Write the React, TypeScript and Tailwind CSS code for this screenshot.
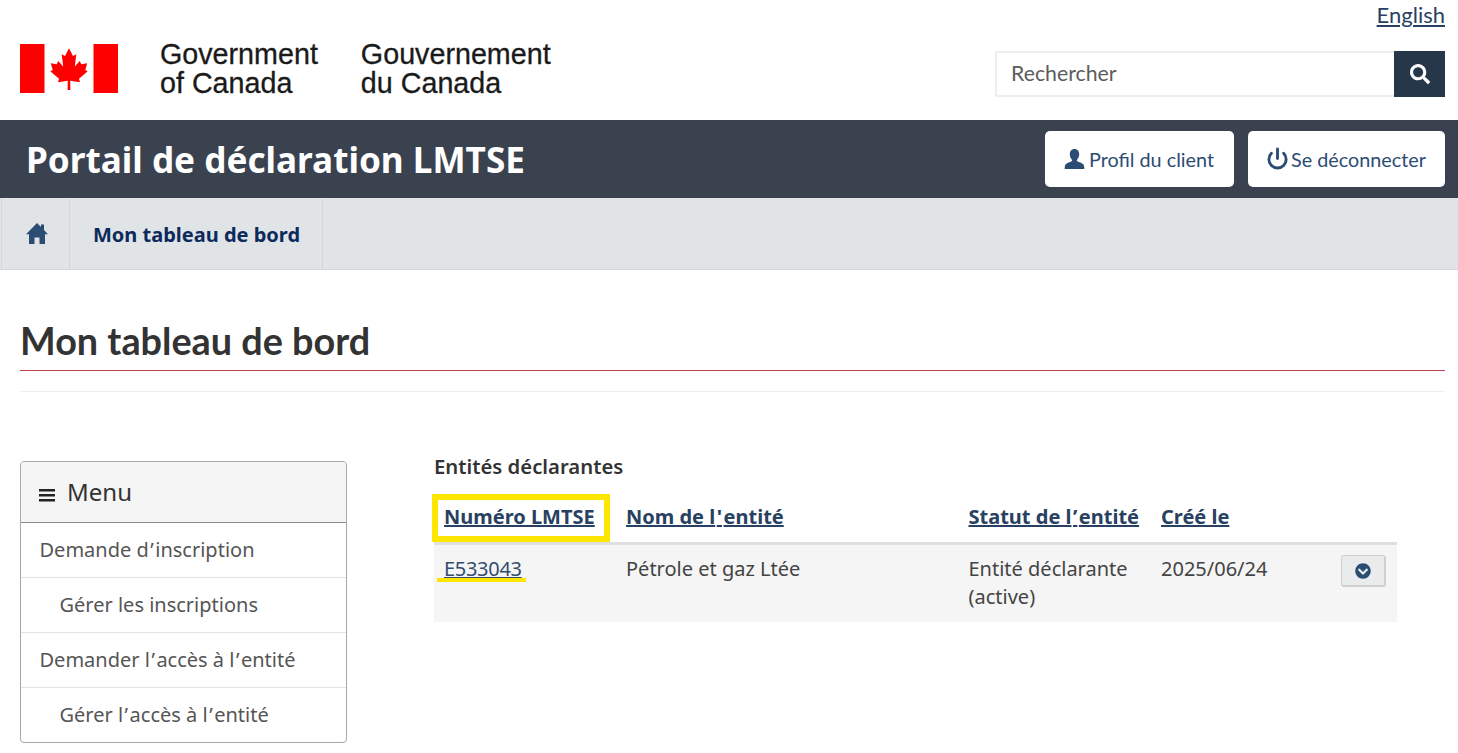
import React from 'react';
import { FaChevronCircleDown, FaSearch } from 'react-icons/fa';
import { Power } from 'lucide-react';

const noto = "font-['Noto_Sans',sans-serif]";
const lato = "font-['Lato',sans-serif]";

// right half of the maple leaf, mirrored below
const leafHalf: [number, number][] = [
  [49, 4.3], [53, 12], [56.3, 10.3], [54.800, 22.500], [59.800, 17], [61.300, 20.300], [67.200, 19.200],
  [65.300, 26], [67.700, 27.300], [59, 34.800], [60, 38.300], [50.200, 36.800], [50.400, 46],
];
const leafPoints = [...leafHalf, ...[...leafHalf].reverse().map(([x, y]) => [98 - x, y])]
  .map((p) => p.join(','))
  .join(' ');

const Flag = () => (
  <svg width="98" height="49" viewBox="0 0 98 49" className="shrink-0">
    <rect x="0" y="0" width="24.5" height="49" fill="#ff0000" />
    <rect x="73.5" y="0" width="24.5" height="49" fill="#ff0000" />
    <polygon fill="#ff0000" points={leafPoints} />
  </svg>
);

const UserIcon = () => (
  <svg width="21" height="20" viewBox="0 0 21 20" fill="#2b4d74">
    <path d="M10.500 0c3 0 4.700 2.200 4.700 5.200 0 2.200-.9 4-2 5.200-.5.600-.5 1.500.2 1.900 2.500 1.300 6 2 6.600 4.400.2.900.3 1.800.3 3.300H.7c0-1.500.1-2.400.3-3.300.6-2.400 4.100-3.100 6.600-4.400.7-.4.700-1.300.2-1.900-1.100-1.200-2-3-2-5.200C5.800 2.200 7.500 0 10.500 0z" />
  </svg>
);

const HomeIcon = () => (
  <svg width="22" height="21" viewBox="0 0 22 21" fill="#2b4d74">
    <path d="M11 0l4 4V1.500h3v5.500l4 4.300h-3V21h-5.500v-6.500h-5V21H3V11.300H0z" />
  </svg>
);

// the apostrophes sit wider in the reference than Noto Sans sets them
const Apos = ({ c }: { c: string }) => <span className="mx-[1.5px]">{c}</span>;

const spaced = (label: string) =>
  label.split(/(['’])/).map((part, i) => (part === '’' || part === "'" ? <Apos key={i} c={part} /> : part));

const MenuItem = ({ label, sub }: { label: string; sub?: boolean }) => (
  <li className={`h-[55px] last:h-[54px] border-b border-[#e3e3e3] last:border-b-0 flex items-center text-[20px] text-[#555] ${sub ? 'pl-[38.500px]' : 'pl-[18.500px]'}`}>
    <span>{spaced(label)}</span>
  </li>
);

export default function App() {
  return (
    <div className={`${noto} bg-white w-[1458px] h-[753px] overflow-hidden text-[#333]`}>
      <header className="h-[120px] flex justify-between pl-5 pr-[13px]">
        <div className="flex items-start pt-[44px]">
          <Flag />
          <div className="ml-[42px] flex gap-[43px] -mt-[4px] font-['Liberation_Sans',sans-serif] text-[28.700px] leading-[29px] text-[#1a1a1a] [-webkit-text-stroke:0.3px_#1a1a1a]">
            <div>Government<br />of Canada</div>
            <div>Gouvernement<br />du Canada</div>
          </div>
        </div>
        <div className="flex flex-col items-end">
          <a href="#" className={`${lato} mt-[1px] text-[22px] leading-[27px] text-[#284162] underline`}>English</a>
          <div className="mt-[23px] flex h-[46px] w-[450px]">
            <div className={`${lato} flex-1 border-2 border-r-0 border-[#eeeeee] flex items-center pl-[14px] text-[21.300px] text-[#5c5c5c]`}>
              Rechercher
            </div>
            <button className="w-[51px] bg-[#26374a] flex items-center justify-center text-white">
              <FaSearch size={20} />
            </button>
          </div>
        </div>
      </header>

      <div className="h-[78px] bg-[#3a4250] flex items-center justify-between pl-[26px] pr-[13px]">
        <div className="text-[35.150px] font-bold text-white leading-none mt-[2px]">Portail de déclaration LMTSE</div>
        <div className={`${lato} flex gap-[14px] text-[19.800px] text-[#2b4d74]`}>
          <button className="h-[56px] w-[189px] bg-white rounded-[5px] flex items-center justify-center gap-[4px] pr-[1px]">
            <UserIcon /> <span className="mt-[1px]">Profil du client</span>
          </button>
          <button className="h-[56px] w-[197px] bg-white rounded-[5px] flex items-center justify-center gap-[2px] pr-[1px]">
            <Power size={23} strokeWidth={3} className="-mt-[2px]" /> <span className="mt-[1px]">Se déconnecter</span>
          </button>
        </div>
      </div>

      <nav className="h-[72px] bg-[#e1e4e7] border-b border-[#d3d6d9] flex pl-[1px]">
        <div className="w-[69px] border-x border-[#d3d6d9] flex items-center justify-center pl-[2px]">
          <HomeIcon />
        </div>
        <div className="w-[253px] border-r border-[#d3d6d9] flex items-center pl-[23px] pt-[2px] text-[20px] font-bold text-[#0d2a5c]">
          Mon tableau de bord
        </div>
      </nav>

      <main className="px-5 pr-[13px]">
        <h1 className={`${lato} mt-[48px] h-[53px] border-b border-[#c0444c] text-[37.800px] font-bold leading-[46px] text-[#333]`}>
          Mon tableau de bord
        </h1>
        <div className="mt-[20px] border-t border-[#eeeeee]" />

        <div className="mt-[69px] flex items-start">
          <aside className="w-[327px] shrink-0 border border-[#a8a8a8] rounded-[4px] overflow-hidden">
            <div className="h-[61px] bg-[#f5f5f5] border-b border-[#8c8c8c] flex items-center pl-[18px] text-[24px] text-[#333]">
              <svg width="16" height="13" viewBox="0 0 16 13" className="mr-[12px] mt-[6px]" fill="#222">
                <rect x="0" y="0" width="16" height="2.500" />
                <rect x="0" y="5" width="16" height="2.500" />
                <rect x="0" y="10" width="16" height="2.500" />
              </svg>
              Menu
            </div>
            <ul>
              <MenuItem label="Demande d’inscription" />
              <MenuItem label="Gérer les inscriptions" sub />
              <MenuItem label="Demander l’accès à l’entité" />
              <MenuItem label="Gérer l’accès à l’entité" sub />
            </ul>
          </aside>

          <section className="ml-[87px] w-[963px] -mt-[10px]">
            <h2 className="h-[30px] text-[20.300px] font-semibold leading-[30px] text-[#333]">Entités déclarantes</h2>
            <div className="mt-[14px] grid grid-cols-[192px_342.500px_192.500px_1fr] h-[50px] border-b-[3px] border-[#e0e0e0] text-[20px] font-bold text-[#284162]">
              <div className="relative pl-[10px] pt-[7px] underline">
                Numéro LMTSE
                <span className="absolute -left-[2px] -top-[1px] w-[178px] h-[48px] border-[6px] border-[#ffe600]" />
              </div>
              <div className="pt-[7px] underline">{spaced("Nom de l'entité")}</div>
              <div className="pt-[7px] underline">{spaced('Statut de l’entité')}</div>
              <div className="pt-[7px] underline">Créé le</div>
            </div>
            <div className="grid grid-cols-[192px_342.500px_192.500px_1fr] h-[77px] bg-[#f5f5f5] text-[20px] leading-[28px] text-[#444]">
              <div className="relative pl-[10px] pt-[10px]">
                <a href="#" className="text-[#344d6e] underline tracking-[-0.3px]">E533043</a>
                <span className="absolute left-[3px] top-[33px] w-[89px] h-[4px] bg-[#ffe600]" />
              </div>
              <div className="pt-[10px]">Pétrole et gaz Ltée</div>
              <div className="pt-[10px]">Entité déclarante<br />(active)</div>
              <div className="pt-[10px] flex justify-between pr-[11px]">
                <span>2025/06/24</span>
                <button className="w-[45px] h-[32px] bg-[#eaebed] border border-[#cfcfcf] border-b-2 border-r-2 rounded-[3px] flex items-center justify-center text-[#2b4d74]">
                  <FaChevronCircleDown size={16} />
                </button>
              </div>
            </div>
          </section>
        </div>
      </main>
    </div>
  );
}
